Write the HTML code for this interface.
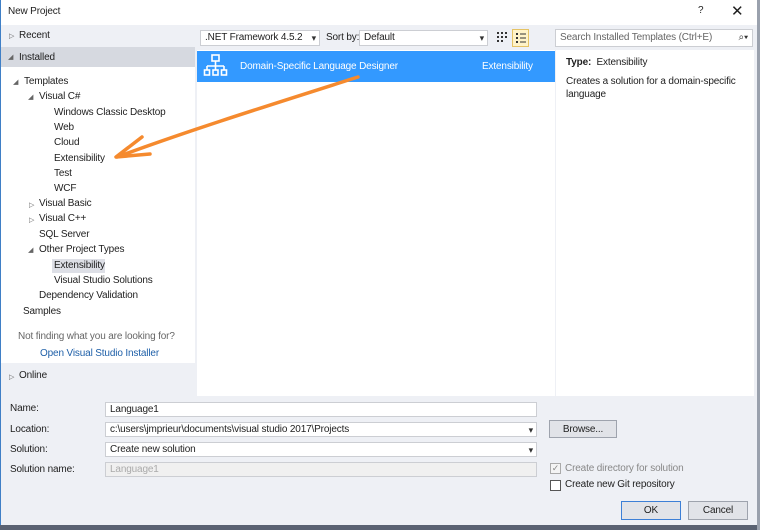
<!DOCTYPE html>
<html><head><style>
*{margin:0;padding:0;box-sizing:border-box}
body{width:760px;height:530px;position:relative;overflow:hidden;background:#eef0f5;font-family:"Liberation Sans",sans-serif;font-size:10px;letter-spacing:-0.15px;color:#1e1e1e}
.a{position:absolute;white-space:nowrap}
.w{background:#fff}
.box{position:absolute;background:#fff;border:1px solid #ccced3;height:15px;padding:1px 4px;font-size:10px;line-height:12px}
.dd::after{content:"▾";position:absolute;right:3px;top:1px;font-size:9px;color:#333}
.btn{position:absolute;background:#e1e3e8;border:1px solid #9ea3ad;text-align:center;height:18px;font-size:10px;display:flex;align-items:center;justify-content:center}
.tri{font-size:7px;color:#666;position:absolute}
</style></head><body>
<div class="a w" style="left:0;top:0;width:760px;height:25px"></div>
<div class="a" style="left:8px;top:6px">New Project</div>
<div class="a" style="left:698px;top:5px">?</div>
<div class="a" style="left:731px;top:2px;font-size:15px">✕</div>
<div class="a" style="left:0;top:47px;width:195px;height:20px;background:#d6d9e0"></div>
<div class="a w" style="left:0;top:67px;width:195px;height:296px"></div>
<div class="a" style="left:0;top:0;width:1px;height:530px;background:#3f7fc6"></div>
<div class="tri" style="left:9px;top:32px">▷</div><div class="a" style="left:19px;top:30px">Recent</div>
<div class="tri" style="left:8px;top:53px">◢</div><div class="a" style="left:19px;top:52px">Installed</div>
<div class="tri" style="left:13px;top:78px">◢</div><div class="a" style="left:24px;top:76px">Templates</div>
<div class="tri" style="left:28px;top:93px">◢</div><div class="a" style="left:39px;top:91px">Visual C#</div>
<div class="a" style="left:54px;top:107px">Windows Classic Desktop</div>
<div class="a" style="left:54px;top:122px">Web</div>
<div class="a" style="left:54px;top:137px">Cloud</div>
<div class="a" style="left:54px;top:153px">Extensibility</div>
<div class="a" style="left:54px;top:168px">Test</div>
<div class="a" style="left:54px;top:183px">WCF</div>
<div class="tri" style="left:29px;top:201px">▷</div><div class="a" style="left:39px;top:198px">Visual Basic</div>
<div class="tri" style="left:29px;top:216px">▷</div><div class="a" style="left:39px;top:213px">Visual C++</div>
<div class="a" style="left:39px;top:229px">SQL Server</div>
<div class="tri" style="left:28px;top:246px">◢</div><div class="a" style="left:39px;top:244px">Other Project Types</div>
<div class="a" style="left:52px;top:259px;width:53px;height:14px;background:#dddfe6"></div>
<div class="a" style="left:54px;top:260px">Extensibility</div>
<div class="a" style="left:54px;top:275px">Visual Studio Solutions</div>
<div class="a" style="left:39px;top:290px">Dependency Validation</div>
<div class="a" style="left:23px;top:306px">Samples</div>
<div class="a" style="left:18px;top:331px;color:#666">Not finding what you are looking for?</div>
<div class="a" style="left:40px;top:348px;color:#1e5fa8">Open Visual Studio Installer</div>
<div class="tri" style="left:9px;top:373px">▷</div><div class="a" style="left:19px;top:370px">Online</div>
<div class="box dd" style="left:200px;top:30px;width:120px;height:16px">.NET Framework 4.5.2</div>
<div class="a" style="left:326px;top:32px">Sort by:</div>
<div class="box dd" style="left:359px;top:30px;width:129px;height:16px">Default</div>
<svg class="a" style="left:496px;top:31px" width="12" height="14"><g fill="#333"><rect x="1" y="1" width="2" height="2"/><rect x="5" y="1" width="2" height="2"/><rect x="9" y="1" width="2" height="2"/><rect x="1" y="5" width="2" height="2"/><rect x="5" y="5" width="2" height="2"/><rect x="9" y="5" width="2" height="2"/><rect x="1" y="9" width="2" height="2"/><rect x="5" y="9" width="2" height="2"/></g></svg>
<div class="a" style="left:512px;top:29px;width:17px;height:18px;background:#fff3c8;border:1px solid #e5c365"><svg width="15" height="16"><g fill="#333"><rect x="3" y="3" width="2" height="2"/><rect x="7" y="3.5" width="6" height="1"/><rect x="3" y="7" width="2" height="2"/><rect x="7" y="7.5" width="6" height="1"/><rect x="3" y="11" width="2" height="2"/><rect x="7" y="11.5" width="6" height="1"/></g></svg></div>
<div class="box" style="left:555px;top:29px;width:198px;height:18px;color:#666;line-height:14px">Search Installed Templates (Ctrl+E)<span style="position:absolute;right:4px;color:#333">⌕▾</span></div>
<div class="a w" style="left:197px;top:50px;width:358px;height:346px"></div>
<div class="a" style="left:197px;top:51px;width:358px;height:31px;background:#3399ff"></div>
<svg class="a" style="left:203px;top:53px" width="26" height="26" viewBox="0 0 26 26" fill="none" stroke="#fff" stroke-width="1.6"><rect x="9" y="2" width="7" height="6"/><path d="M12.5 8v5M4 13h17M4 13v4M12.5 13v4M21 13v4"/><rect x="1.5" y="17" width="5" height="5"/><rect x="10" y="17" width="5" height="5"/><rect x="18.5" y="17" width="5" height="5"/></svg>
<div class="a" style="left:240px;top:61px;color:#fff">Domain-Specific Language Designer</div>
<div class="a" style="left:482px;top:61px;color:#fff">Extensibility</div>
<div class="a w" style="left:556px;top:50px;width:198px;height:346px"></div>
<div class="a" style="left:566px;top:57px"><b>Type:</b>&nbsp; Extensibility</div>
<div class="a" style="left:566px;top:75px;line-height:13px;white-space:normal;width:172px">Creates a solution for a domain-specific language</div>
<svg class="a" style="left:0;top:0" width="760" height="530"><path d="M358 77 C 270 105, 190 130, 117 157" stroke="#f58a2e" stroke-width="3.5" fill="none" stroke-linecap="round"/><path d="M142 137 L116 157 L150 154" stroke="#f58a2e" stroke-width="3.5" fill="none" stroke-linecap="round" stroke-linejoin="round"/></svg>
<div class="a" style="left:10px;top:403px">Name:</div>
<div class="box" style="left:105px;top:402px;width:432px">Language1</div>
<div class="a" style="left:10px;top:424px">Location:</div>
<div class="box dd" style="left:105px;top:422px;width:432px">c:\users\jmprieur\documents\visual studio 2017\Projects</div>
<div class="btn" style="left:549px;top:420px;width:68px">Browse...</div>
<div class="a" style="left:10px;top:444px">Solution:</div>
<div class="box dd" style="left:105px;top:442px;width:432px">Create new solution</div>
<div class="a" style="left:10px;top:464px">Solution name:</div>
<div class="box" style="left:105px;top:462px;width:432px;background:#f0f0f0;color:#aaa">Language1</div>
<div class="a" style="left:550px;top:463px;width:11px;height:11px;border:1px solid #aaa;background:#f4f4f4;font-size:9px;line-height:9px;color:#888;text-align:center">✓</div>
<div class="a" style="left:565px;top:463px;color:#888">Create directory for solution</div>
<div class="a" style="left:550px;top:480px;width:11px;height:11px;border:1px solid #555;background:#fff"></div>
<div class="a" style="left:565px;top:479px">Create new Git repository</div>
<div class="btn" style="left:621px;top:501px;width:60px;height:19px;border-color:#3c7fd6">OK</div>
<div class="btn" style="left:688px;top:501px;width:60px;height:19px">Cancel</div>
<div class="a" style="left:0;top:525px;width:760px;height:5px;background:#5a6272"></div>
<div class="a" style="left:757px;top:0;width:3px;height:530px;background:#9aa1ad"></div>
</body></html>
